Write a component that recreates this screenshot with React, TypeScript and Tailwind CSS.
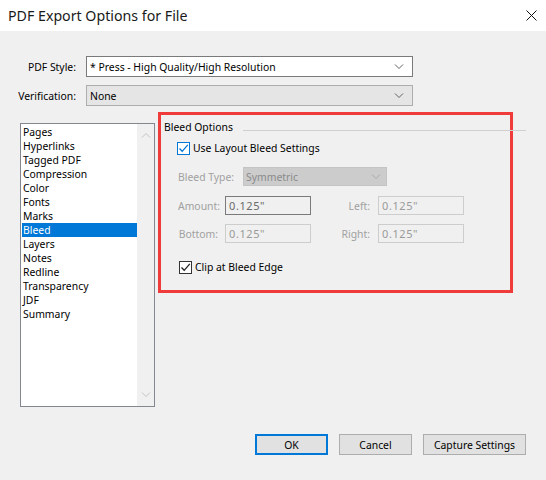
import React from 'react';

const items = [
    'Pages', 'Hyperlinks', 'Tagged PDF', 'Compression', 'Color', 'Fonts', 'Marks',
    'Bleed', 'Layers', 'Notes', 'Redline', 'Transparency', 'JDF', 'Summary',
];

function Chevron({ color = '#606060', up = false }: { color?: string; up?: boolean }) {
    return (
        <svg width="10" height="6" viewBox="0 0 10 6" fill="none" stroke={color} strokeWidth="1">
            {up ? <polyline points="1,5.5 5,1.5 9,5.5" /> : <polyline points="1,0.5 5,4.5 9,0.5" />}
        </svg>
    );
}

function Check({ color }: { color: string }) {
    return (
        <svg width="11" height="11" viewBox="0 0 11 11" fill="none" stroke={color} strokeWidth="1.3">
            <polyline points="1.5,5.5 4.2,8.3 9.8,1.8" />
        </svg>
    );
}

function Field({ value, dark = false }: { value: string; dark?: boolean }) {
    return (
        <div
            className={`w-[86px] h-[19px] flex items-center pl-[3px] bg-[#f0f0f0] border text-[11px] tracking-[0.6px] ${
                dark ? 'border-[#7a7a7a] text-[#6a6a6a]' : 'border-[#cdcdcd] text-[#9a9a9a]'
            }`}
        >
            {value}
        </div>
    );
}

export default function App() {
    return (
        <div className="w-[546px] h-[480px] bg-[#f0f0f0] flex flex-col font-['Noto_Sans',sans-serif] text-[10.4px] leading-[14px] text-black overflow-hidden">
            {/* title bar */}
            <div className="h-[31px] bg-white flex items-center justify-between pl-[8px] pr-[9px] shrink-0">
                <span className="text-[14.2px] leading-[20px] text-[#1a1a1a]">PDF Export Options for File</span>
                <svg width="11" height="11" viewBox="0 0 11 11" stroke="#111" strokeWidth="1">
                    <line x1="0.5" y1="0.5" x2="10.5" y2="10.5" />
                    <line x1="10.5" y1="0.5" x2="0.5" y2="10.5" />
                </svg>
            </div>

            {/* style / verification */}
            <div className="flex items-center mt-[25px]">
                <span className="w-[77px] text-right pr-[1px]">PDF Style:</span>
                <div className="ml-[9px] w-[327px] h-[21px] bg-white border border-[#7a7a7a] flex items-center justify-between pl-[3px] pr-[8px]">
                    <span>* Press - High Quality/High Resolution</span>
                    <Chevron />
                </div>
            </div>
            <div className="flex items-center mt-[8px]">
                <span className="w-[77px] text-right pr-[1px]">Verification:</span>
                <div className="ml-[9px] w-[327px] h-[21px] bg-[#e5e5e5] border border-[#adadad] flex items-center justify-between pl-[3px] pr-[8px]">
                    <span>None</span>
                    <Chevron />
                </div>
            </div>

            {/* main area */}
            <div className="flex items-start mt-[6px] pl-[20px]">
                <div className="mt-[11px] w-[135px] h-[284px] bg-white border border-[#828790] flex">
                    <div className="flex-1 pt-[1px] pl-[1px]">
                        {items.map((it) => (
                            <div
                                key={it}
                                className={`h-[14px] pl-[1px] ${it === 'Bleed' ? 'bg-[#0078d7] text-white' : ''}`}
                            >
                                {it}
                            </div>
                        ))}
                    </div>
                    <div className="w-[17px] bg-[#f0f0f0] flex flex-col items-center justify-between pt-[8px] pb-[8px]">
                        <Chevron color="#c2c2c2" up />
                        <Chevron color="#c2c2c2" />
                    </div>
                </div>

                <div className="ml-[3px] w-[355px] h-[181px] border-[3px] border-[#f03b3b] flex flex-col">
                    <div className="flex items-start pt-[5px] pl-[3px]">
                        <span className="w-[79px] shrink-0">Bleed Options</span>
                        <div className="flex-1 -mr-[16px] mt-[10px] h-px bg-[#cfcfcf]" />
                    </div>

                    <div className="flex items-center mt-[7px] pl-[16px]">
                        <div className="w-[13px] h-[13px] border border-[#0078d7] bg-white flex items-center justify-center">
                            <Check color="#0078d7" />
                        </div>
                        <span className="ml-[3px]">Use Layout Bleed Settings</span>
                    </div>

                    <div className="flex items-center mt-[12px] pl-[17px] text-[#a0a0a0]">
                        <span className="w-[65px]">Bleed Type:</span>
                        <div className="w-[144px] h-[19px] bg-[#cccccc] border border-[#c4c4c4] flex items-center justify-between pl-[2px] pr-[5px] text-[#8a8a8a]">
                            <span>Symmetric</span>
                            <Chevron color="#a8a8a8" />
                        </div>
                    </div>

                    <div className="flex items-center mt-[10px] pl-[17px] text-[#a0a0a0]">
                        <span className="w-[40px] text-right">Amount:</span>
                        <div className="ml-[7px]"><Field value={'0.125"'} dark /></div>
                        <span className="w-[59px] text-right">Left:</span>
                        <div className="ml-[8px]"><Field value={'0.125"'} /></div>
                    </div>

                    <div className="flex items-center mt-[9px] pl-[17px] text-[#a0a0a0]">
                        <span className="w-[40px] text-right">Bottom:</span>
                        <div className="ml-[7px]"><Field value={'0.125"'} /></div>
                        <span className="w-[59px] text-right">Right:</span>
                        <div className="ml-[8px]"><Field value={'0.125"'} /></div>
                    </div>

                    <div className="flex items-center mt-[17px] pl-[18px]">
                        <div className="w-[13px] h-[13px] border border-[#333333] bg-white flex items-center justify-center">
                            <Check color="#222222" />
                        </div>
                        <span className="ml-[3px]">Clip at Bleed Edge</span>
                    </div>
                </div>
            </div>

            {/* buttons */}
            <div className="flex justify-end mt-[27px] pr-[20px] gap-[11px]">
                <button className="w-[73px] h-[21px] bg-[#e1e1e1] border-2 border-[#0078d7]">OK</button>
                <button className="w-[73px] h-[21px] bg-[#e1e1e1] border border-[#adadad]">Cancel</button>
                <button className="w-[103px] h-[21px] bg-[#e1e1e1] border border-[#adadad]">Capture Settings</button>
            </div>
        </div>
    );
}
